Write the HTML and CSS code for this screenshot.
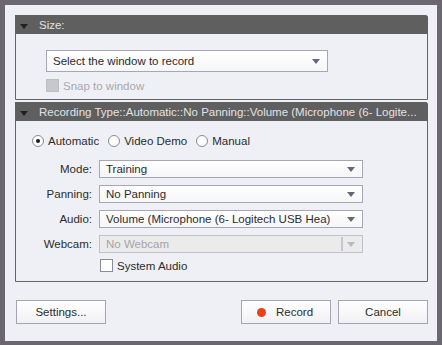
FILE: index.html
```html
<!DOCTYPE html>
<html>
<head>
<meta charset="utf-8">
<link rel="stylesheet" href="styles.css">
</head>
<body>
<div class="frame">
  <div class="window">
    <section class="panel size-panel">
      <div class="panel-head"><span class="tri"></span><span>Size:</span></div>
      <div class="panel-body size-body">
        <div class="select big"><span>Select the window to record</span><span class="arrow"></span></div>
        <label class="check disabled"><span class="box"></span><span>Snap to window</span></label>
      </div>
    </section>
    <section class="panel rec-panel">
      <div class="panel-head"><span class="tri"></span><span class="head-text">Recording Type::Automatic::No Panning::Volume (Microphone (6- Logite...</span></div>
      <div class="panel-body rec-body">
        <div class="radios">
          <label class="radio"><span class="circle on"></span><span>Automatic</span></label>
          <label class="radio"><span class="circle"></span><span>Video Demo</span></label>
          <label class="radio"><span class="circle"></span><span>Manual</span></label>
        </div>
        <div class="form">
          <span class="lbl">Mode:</span>
          <div class="select"><span>Training</span><span class="arrow"></span></div>
          <span class="lbl">Panning:</span>
          <div class="select"><span>No Panning</span><span class="arrow"></span></div>
          <span class="lbl">Audio:</span>
          <div class="select"><span>Volume (Microphone (6- Logitech USB Hea)</span><span class="arrow"></span></div>
          <span class="lbl">Webcam:</span>
          <div class="select off"><span>No Webcam</span><span class="sep"></span><span class="arrow"></span></div>
          <span></span>
          <label class="check"><span class="box"></span><span>System Audio</span></label>
        </div>
      </div>
    </section>
    <div class="buttons">
      <button class="btn">Settings...</button>
      <div class="right-btns">
        <button class="btn"><span class="dot"></span>Record</button>
        <button class="btn">Cancel</button>
      </div>
    </div>
  </div>
</div>
</body>
</html>
```

FILE: styles.css
```css
html, body {
  margin: 0;
  padding: 0;
}
body {
  width: 442px;
  height: 345px;
  background: #6b6670;
  font-family: "Liberation Sans", Arial, sans-serif;
  font-size: 11.5px;
  color: #2c2c2c;
  overflow: hidden;
}
.frame {
  padding: 5px 5px 4px 5px;
  height: 345px;
  box-sizing: border-box;
}
.window {
  height: 336px;
  background: #eff0f5;
  padding: 10px 9px 0 10px;
  box-sizing: border-box;
  display: flex;
  flex-direction: column;
}
.panel {
  border: 1px solid #646464;
  border-top-right-radius: 3px;
  background: #eff0f5;
}
.rec-panel {
  margin-top: 2px;
}
.panel-head {
  height: 18px;
  background: #5f5f5f;
  color: #e2e2e4;
  display: flex;
  align-items: center;
  font-size: 11.5px;
  margin: -1px -1px 0 -1px;
  padding-top: 1px;
  border-top-right-radius: 3px;
  white-space: nowrap;
  overflow: hidden;
}
.tri {
  width: 0;
  height: 0;
  border-left: 4px solid transparent;
  border-right: 4px solid transparent;
  border-top: 5px solid #222;
  margin: 3px 11px 0 5px;
}
.size-body {
  padding: 16px 0 7px 30px;
}
.select {
  display: flex;
  align-items: center;
  width: 264px;
  height: 18px;
  box-sizing: border-box;
  border: 1px solid #a7a7b4;
  background: linear-gradient(#ffffff, #f6f6f8);
  padding-left: 6px;
  position: relative;
  white-space: nowrap;
}
.select > span:first-child {
  flex: 1;
}
.select.big {
  width: 282px;
  height: 22px;
}
.arrow {
  width: 0;
  height: 0;
  border-left: 4px solid transparent;
  border-right: 4px solid transparent;
  border-top: 5px solid #666678;
  margin: 1px 7px 0 0;
}
.select.off {
  background: #ebebec;
  color: #a4a4a8;
  border-color: #c0c0c6;
}
.select.off .arrow {
  border-top-color: #b8b8c0;
}
.sep {
  width: 2px;
  height: 14px;
  border-left: 1px solid #c8c8cc;
  border-right: 1px solid #c8c8cc;
  box-sizing: border-box;
  margin-right: 4px;
}
.check {
  display: flex;
  align-items: center;
  gap: 4px;
  margin-top: 7px;
  height: 13px;
}
.check .box {
  width: 11px;
  height: 11px;
  border: 1px solid #8c8c98;
  background: #fdfdfd;
}
.check.disabled {
  color: #a8a8ac;
}
.check.disabled .box {
  background: #c8c8cc;
  border-color: #bdbdc2;
}
.rec-body {
  padding: 14px 0 9px 16px;
}
.radios {
  display: flex;
  align-items: center;
  height: 12px;
  gap: 9px;
}
.radio {
  display: flex;
  align-items: center;
  gap: 4px;
}
.circle {
  width: 10px;
  height: 10px;
  border: 1px solid #8a8a96;
  border-radius: 50%;
  background: #fdfdfd;
  position: relative;
}
.circle.on::after {
  content: "";
  position: absolute;
  left: 3px;
  top: 3px;
  width: 4px;
  height: 4px;
  border-radius: 50%;
  background: #1a1a1a;
}
.form {
  display: grid;
  grid-template-columns: 76px 264px;
  column-gap: 7px;
  row-gap: 7px;
  margin-top: 13px;
  margin-left: -16px;
  align-items: center;
}
.form .check {
  margin-top: -1px;
  margin-left: 1px;
}
.lbl {
  text-align: right;
}
.buttons {
  display: flex;
  justify-content: space-between;
  margin-top: 18px;
  padding-left: 1px;
}
.right-btns {
  display: flex;
  gap: 7px;
}
.btn {
  width: 90px;
  height: 24px;
  border: 1px solid #a4a4b2;
  background: linear-gradient(#ffffff, #f1f1f4);
  font-family: "Liberation Sans", Arial, sans-serif;
  font-size: 11.5px;
  color: #2c2c2c;
  display: flex;
  align-items: center;
  justify-content: center;
  padding: 0;
}
.dot {
  width: 9px;
  height: 9px;
  border-radius: 50%;
  background: #e8421b;
  margin-right: 10px;
  margin-left: -2px;
}
```
